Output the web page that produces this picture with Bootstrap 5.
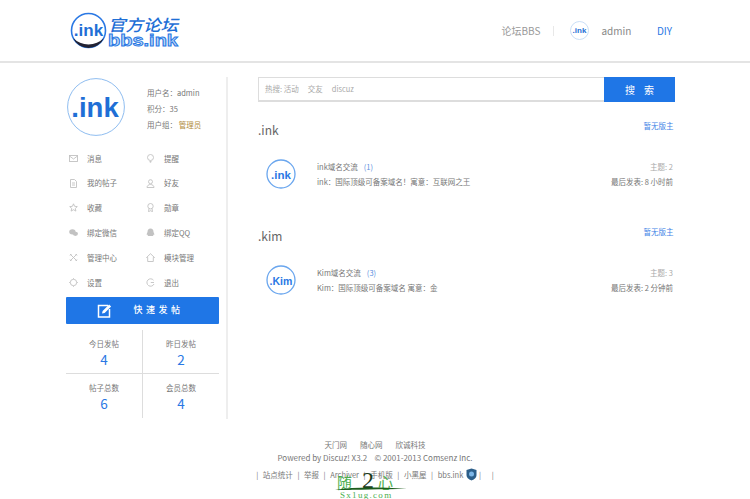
<!DOCTYPE html>
<html lang="zh">
<head>
<meta charset="utf-8">
<title>bbs.ink</title>
<link href="https://cdn.jsdelivr.net/npm/bootstrap@5.3.0/dist/css/bootstrap.min.css" rel="stylesheet">
<style>
html,body{height:499px;overflow:hidden}
body{font-family:"Noto Sans CJK SC","Noto Sans",sans-serif;font-size:7.5px;line-height:1.3;color:#777;background:#fff;position:relative}
a{color:inherit;text-decoration:none}
.ink-blue{color:#2a78e4}
.top-bar{height:63px;border-bottom:2px solid #e4e4e4;padding:0 78px 0 70px}
.top-nav{font-size:10px;color:#999}
.top-nav .sep{width:1px;height:10px;background:#e8e8e8;margin:0 16px 0 13px}
.top-nav .adm{color:#888;margin:0 25.500px 0 12px}
.shell{padding:14px 0 0 66px;width:675px;height:375px}
.side{width:162px;height:342px;border-right:2px solid #eee;margin-right:30px;flex:none}
.side-in{width:153px}
.profile{height:69px;padding-left:1px}
.big-av{width:58px;height:58px;flex:none;margin-right:22px;margin-top:1px}
.prof-lines{padding-top:8px;line-height:16px}
.gold{color:#b08a3c}
.menu-grid{display:grid;grid-template-columns:77px 76px;grid-auto-rows:24.8px}
.menu-it{display:flex;align-items:center;padding-left:3px}
.menu-it svg{width:9px;height:9px;margin-right:9px;flex:none}
.menu-it svg *{fill:none;stroke:#c2c2c2;stroke-width:.9}
.menu-it svg .solid{fill:#c2c2c2;stroke:none}
.post-btn{background:#1f76e6;color:#fff;border-radius:1px;height:27px;font-size:9px;letter-spacing:3.5px;margin-top:2px;font-weight:500}
.post-btn svg{width:15px;height:15px;margin-right:21px;margin-left:-4px}
.stat-grid{display:grid;grid-template-columns:77px 76px;margin-top:6px}
.stat-c{height:44px;text-align:center;padding-top:9px}
.stat-c b{display:block;font-weight:400;font-size:13.5px;line-height:16px;color:#2a78e4;margin-top:2px}
.stat-c:nth-child(odd){border-right:1px solid #ddd}
.stat-c:nth-child(-n+2){border-bottom:1px solid #ddd}
.main-col{width:417px;flex:none}
.search-box{height:25px;border:1px solid #ddd;border-bottom-width:2px;border-right:0;color:#aaa;padding-left:6px}
.search-box span{margin-right:9px}
.search-go{width:71px;height:25px;background:#1f76e6;color:#fff;font-size:10px;letter-spacing:9px;padding-left:9px;flex:none}
.sec-head{font-size:12px;color:#666;line-height:16px;padding-top:1px}
.sec-owner{color:#3f84e6;padding-right:1.500px}
.sec-one{height:105.500px;padding-top:19px}
.forum-row{margin-top:21px;padding-left:8px}
.forum-ic{width:30px;height:30px;flex:none;margin-right:21px}
.forum-txt{line-height:15px}
.forum-txt .cnt{color:#5a8fe0;margin-left:6px}
.forum-right{text-align:right;line-height:15px;padding-right:2px}
.forum-right .lt{color:#aaa}
.foot{text-align:center;width:750px;line-height:13px;color:#777;font-size:7.5px}
.foot-l span{margin:0 6.5px}
.foot-p{font-size:8px}
.foot-b{margin-top:4px}
.foot-b i{font-style:normal;margin:0 2.300px}
.wm{position:absolute;left:334px;top:468px;width:76px;height:31px}
</style>
</head>
<body>
<header class="top-bar d-flex align-items-center justify-content-between">
  <a href="#" class="d-block">
    <svg width="110" height="40" viewBox="0 0 110 40">
      <circle cx="18.5" cy="19.5" r="17" fill="#fff" stroke="#2a78e4" stroke-width="1.6"/>
      <path d="M3 27a17 17 0 0 0 31 0a22 22 0 0 1-31 0z" fill="#223"/>
      <text x="18.5" y="25" text-anchor="middle" font-family="Liberation Sans" font-weight="700" font-size="17" fill="#1f6fd6">.ink</text>
      <text x="38" y="20" font-family="Noto Sans CJK SC" font-weight="500" font-size="16" fill="#1f6fd6" textLength="70" lengthAdjust="spacingAndGlyphs" font-style="italic">官方论坛</text>
      <text x="38" y="35" font-family="Liberation Sans" font-weight="700" font-size="16" fill="#bcd8f5" stroke="#2a78e4" stroke-width=".9" textLength="70" lengthAdjust="spacingAndGlyphs">bbs.ink</text>
    </svg>
  </a>
  <nav class="top-nav d-flex align-items-center">
    <a href="#">论坛BBS</a><span class="sep"></span>
    <svg width="19" height="19" viewBox="0 0 19 19"><circle cx="9.5" cy="9.5" r="9" fill="#fff" stroke="#bcd6f4" stroke-width=".8"/><text x="9.5" y="12.3" text-anchor="middle" font-family="Liberation Sans" font-weight="700" font-size="8" fill="#1f6fd6">.ink</text></svg>
    <a href="#" class="adm">admin</a>
    <a href="#" class="ink-blue">DIY</a>
  </nav>
</header>

<div class="shell d-flex">
  <aside class="side">
    <div class="side-in">
      <div class="profile d-flex">
        <svg class="big-av" viewBox="0 0 58 58"><circle cx="29" cy="29" r="28.4" fill="#fff" stroke="#8fbdf0" stroke-width="1"/><text x="28" y="39" text-anchor="middle" font-family="Liberation Sans" font-weight="700" font-size="27.5" fill="#1f6fd6">.ink</text></svg>
        <div class="prof-lines">
          <div>用户名：admin</div>
          <div>积分：35</div>
          <div>用户组： <span class="gold">管理员</span></div>
        </div>
      </div>
      <div class="menu-grid">
        <a href="#" class="menu-it"><svg viewBox="0 0 9 9"><rect x=".5" y="1.5" width="8" height="6"/><path d="M.5 2l4 3 4-3"/></svg>消息</a>
        <a href="#" class="menu-it"><svg viewBox="0 0 9 9"><circle cx="4.5" cy="3.5" r="3"/><path d="M3.5 7.5h2M3.8 8.8h1.4"/></svg>提醒</a>
        <a href="#" class="menu-it"><svg viewBox="0 0 9 9"><path d="M1.5.5h4l2 2v6h-6zM3 4h3M3 6h3"/></svg>我的帖子</a>
        <a href="#" class="menu-it"><svg viewBox="0 0 9 9"><circle cx="4.5" cy="2.7" r="2"/><path d="M1 8.500c0-4 7-4 7 0z"/></svg>好友</a>
        <a href="#" class="menu-it"><svg viewBox="0 0 9 9"><path d="M4.500.8l1.100 2.500 2.700.3-2 1.800.6 2.700-2.400-1.400-2.400 1.400.6-2.700-2-1.800 2.700-.3z"/></svg>收藏</a>
        <a href="#" class="menu-it"><svg viewBox="0 0 9 9"><circle cx="4.500" cy="3.200" r="2.700"/><path d="M3 5.500L2.500 8.700l2-1 2 1L6 5.500"/></svg>勋章</a>
        <a href="#" class="menu-it"><svg viewBox="0 0 9 9"><ellipse class="solid" cx="3.400" cy="3.800" rx="3.200" ry="2.600"/><ellipse class="solid" cx="6.400" cy="5.800" rx="2.600" ry="2.100"/></svg>绑定微信</a>
        <a href="#" class="menu-it"><svg viewBox="0 0 9 9"><path class="solid" d="M4.500.5c2 0 3 1.500 3 3.500l1 2.500-1 .2-.5 1.300H2l-.5-1.300-1-.2 1-2.500c0-2 1-3.500 3-3.500z"/></svg>绑定QQ</a>
        <a href="#" class="menu-it"><svg viewBox="0 0 9 9"><path d="M1 1l7 7M8 1L1 8M1 2.500L2.500 1M6.500 8L8 6.500M6.500 1L8 2.500M1 6.500L2.500 8"/></svg><span class="text-nowrap">管理中心</span></a>
        <a href="#" class="menu-it"><svg viewBox="0 0 9 9"><path d="M.5 4.500l4-3.800 4 3.800H7.300v4H1.700v-4z"/></svg>模块管理</a>
        <a href="#" class="menu-it"><svg viewBox="0 0 9 9"><circle cx="4.500" cy="4.500" r="3.200"/><path d="M4.500.2v1M4.500 7.800v1M.2 4.500h1M7.800 4.500h1"/></svg>设置</a>
        <a href="#" class="menu-it"><svg viewBox="0 0 9 9"><path d="M7.500 2.200A3.700 3.700 0 1 0 8 6M4.800 4.500H8"/></svg>退出</a>
      </div>
      <a href="#" class="post-btn d-flex align-items-center justify-content-center">
        <svg viewBox="0 0 15 15"><path d="M11 2.500H1.500v11.500h11V6" fill="none" stroke="#fff" stroke-width="1.500"/><path d="M5 10.500l.6-2.600 6.500-6.500 2 2-6.500 6.500z" fill="#fff"/></svg>
        <span>快速发帖</span>
      </a>
      <div class="stat-grid">
        <div class="stat-c">今日发帖<b>4</b></div>
        <div class="stat-c">昨日发帖<b>2</b></div>
        <div class="stat-c">帖子总数<b>6</b></div>
        <div class="stat-c">会员总数<b>4</b></div>
      </div>
    </div>
  </aside>
  <main class="main-col">
    <div class="d-flex">
      <div class="search-box flex-grow-1 d-flex align-items-center"><span>热搜: 活动</span><span>交友</span><span>discuz</span></div>
      <a href="#" class="search-go d-flex align-items-center justify-content-center">搜索</a>
    </div>
    <section class="sec-one">
      <div class="d-flex justify-content-between align-items-start">
        <div class="sec-head">.ink</div>
        <a href="#" class="sec-owner">暂无版主</a>
      </div>
      <div class="forum-row d-flex align-items-center">
        <svg class="forum-ic" viewBox="0 0 30 30"><circle cx="15" cy="15" r="14" fill="#fff" stroke="#6aa6ee" stroke-width="1.300"/><text x="15" y="19.500" text-anchor="middle" font-family="Liberation Sans" font-weight="700" font-size="11.500" fill="#2a78e4">.ink</text></svg>
        <div class="forum-txt flex-grow-1"><div>ink域名交流<span class="cnt">(1)</span></div><div>ink：国际顶级可备案域名！寓意：互联网之王</div></div>
        <div class="forum-right"><div class="lt">主题: 2</div><div>最后发表: 8 小时前</div></div>
      </div>
    </section>
    <section class="sec-one">
      <div class="d-flex justify-content-between align-items-start">
        <div class="sec-head">.kim</div>
        <a href="#" class="sec-owner">暂无版主</a>
      </div>
      <div class="forum-row d-flex align-items-center">
        <svg class="forum-ic" viewBox="0 0 30 30"><circle cx="15" cy="15" r="14" fill="#fff" stroke="#6aa6ee" stroke-width="1.300"/><text x="15" y="19.500" text-anchor="middle" font-family="Liberation Sans" font-weight="700" font-size="10.500" fill="#2a78e4">.Kim</text></svg>
        <div class="forum-txt flex-grow-1"><div>Kim域名交流<span class="cnt">(3)</span></div><div>Kim：国际顶级可备案域名 寓意：金</div></div>
        <div class="forum-right"><div class="lt">主题: 3</div><div>最后发表: 2 分钟前</div></div>
      </div>
    </section>
  </main>
</div>

<footer class="foot">
  <div class="foot-l"><span>天门网</span><span>随心网</span><span>欣诚科技</span></div>
  <div class="foot-p">Powered by Discuz! X3.2 &nbsp;&nbsp; © 2001-2013 Comsenz Inc.</div>
  <div class="foot-b d-flex justify-content-center align-items-center"><i>|</i><i>站点统计</i><i>|</i><i>举报</i><i>|</i><i>Archiver</i><i>|</i><i>手机版</i><i>|</i><i>小黑屋</i><i>|</i><i>bbs.ink</i>
    <svg width="11" height="13" viewBox="0 0 11 13"><path d="M5.500.5L10.500 2v5c0 3-2.500 4.500-5 5.500C3 11.500.5 10 .5 7V2z" fill="#2c5f8a"/><circle cx="5.500" cy="6" r="2.500" fill="#7db7e8"/></svg>
    <i>|</i><i>&nbsp;</i><i>|</i></div>
</footer>
<svg class="wm" viewBox="0 0 76 31">
  <text x="3" y="20" font-family="Noto Sans CJK SC" font-size="15" fill="#4caf50">随</text>
  <text x="28" y="20" font-family="Liberation Serif" font-size="24" fill="#1c3b1c">2</text>
  <text x="44" y="20" font-family="Noto Sans CJK SC" font-size="15" fill="#4caf50">心</text>
  <path d="M1 22c20-3 40-3 72-1c-25 0-50 1-72 1z" fill="#1c5c1c"/>
  <text x="6" y="30" font-family="Liberation Serif" font-size="9" letter-spacing="1.300" fill="#4caf50">Sx1ug.com</text>
</svg>
</body>
</html>
